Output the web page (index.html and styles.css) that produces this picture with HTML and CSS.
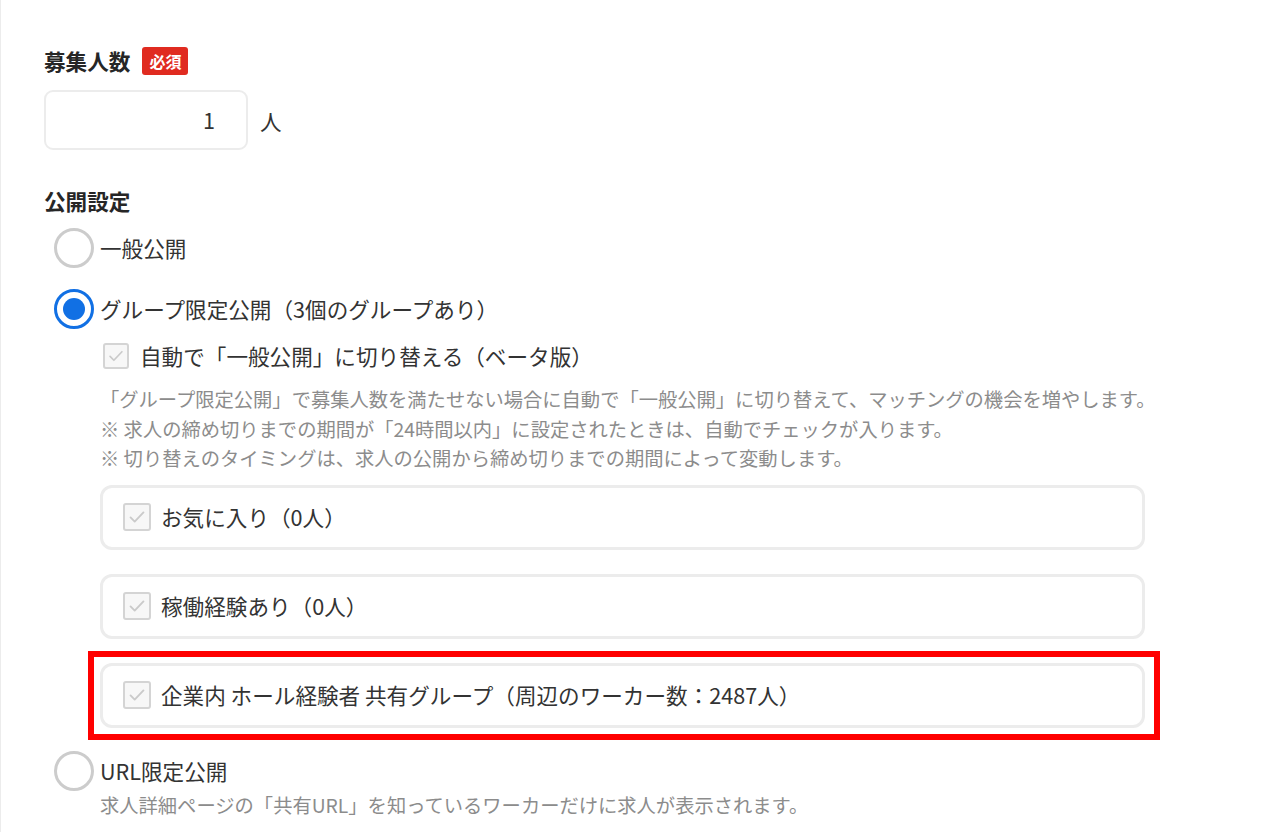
FILE: index.html
```html
<!DOCTYPE html>
<html lang="ja">
<head>
<meta charset="utf-8">
<title>募集設定</title>
<link rel="stylesheet" href="styles.css">
</head>
<body>
<div class="page">
  <section class="field">
    <div class="field-title">
      <span class="title-text">募集人数</span>
      <span class="badge">必須</span>
    </div>
    <div class="number-row">
      <div class="number-input">1</div>
      <span class="unit">人</span>
    </div>
  </section>

  <section class="field field-publish">
    <div class="field-title">
      <span class="title-text">公開設定</span>
    </div>
    <div class="radio-list">
      <div class="radio-option">
        <span class="radio"></span>
        <span class="radio-label">一般公開</span>
      </div>

      <div class="radio-option radio-option-gap">
        <span class="radio radio-on"><span class="radio-dot"></span></span>
        <span class="radio-label">グループ限定公開（3個のグループあり）</span>
      </div>
      <div class="option-body">
        <div class="check-row">
          <span class="checkbox">
            <svg viewBox="0 0 26 26" width="24" height="24"><path d="M6 13.5l4.5 4.5L20 8" fill="none" stroke="#cacaca" stroke-width="2" stroke-linecap="round" stroke-linejoin="round"/></svg>
          </span>
          <span class="check-label">自動で「一般公開」に切り替える（ベータ版）</span>
        </div>
        <div class="note">
          <p>「グループ限定公開」で募集人数を満たせない場合に自動で「一般公開」に切り替えて、マッチングの機会を増やします。</p>
          <p>※ 求人の締め切りまでの期間が「24時間以内」に設定されたときは、自動でチェックが入ります。</p>
          <p>※ 切り替えのタイミングは、求人の公開から締め切りまでの期間によって変動します。</p>
        </div>
        <div class="group-list">
          <div class="group-card">
            <span class="checkbox">
              <svg viewBox="0 0 26 26" width="24" height="24"><path d="M6 13.5l4.5 4.5L20 8" fill="none" stroke="#cacaca" stroke-width="2" stroke-linecap="round" stroke-linejoin="round"/></svg>
            </span>
            <span class="check-label">お気に入り（0人）</span>
          </div>
          <div class="group-card">
            <span class="checkbox">
              <svg viewBox="0 0 26 26" width="24" height="24"><path d="M6 13.5l4.5 4.5L20 8" fill="none" stroke="#cacaca" stroke-width="2" stroke-linecap="round" stroke-linejoin="round"/></svg>
            </span>
            <span class="check-label">稼働経験あり（0人）</span>
          </div>
          <div class="group-card group-card-highlight">
            <span class="checkbox">
              <svg viewBox="0 0 26 26" width="24" height="24"><path d="M6 13.5l4.5 4.5L20 8" fill="none" stroke="#cacaca" stroke-width="2" stroke-linecap="round" stroke-linejoin="round"/></svg>
            </span>
            <span class="check-label">企業内 ホール経験者 共有グループ（周辺のワーカー数：2487人）</span>
          </div>
        </div>
      </div>

      <div class="radio-option radio-option-last">
        <span class="radio"></span>
        <span class="radio-label">URL限定公開</span>
      </div>
      <div class="option-body">
        <p class="note note-single">求人詳細ページの「共有URL」を知っているワーカーだけに求人が表示されます。</p>
      </div>
    </div>
  </section>
</div>
</body>
</html>
```
FILE: styles.css
```css
* {
  box-sizing: border-box;
}

html, body {
  margin: 0;
  padding: 0;
  background: #ffffff;
}

body {
  font-family: "Noto Sans CJK JP", "Noto Sans", sans-serif;
  color: #333333;
}

p {
  margin: 0;
}

.page {
  min-height: 832px;
  border-left: 1px solid #ececec;
  padding: 47px 0 0 43px;
}

.field-title {
  display: flex;
  align-items: center;
  height: 28px;
}

.title-text {
  font-size: 21.6px;
  line-height: 28px;
  font-weight: 700;
  color: #262626;
}

.badge {
  margin-left: 12px;
  height: 28px;
  padding: 0 7px;
  border-radius: 3px;
  background: #e02b20;
  color: #ffffff;
  font-size: 16px;
  font-weight: 700;
  line-height: 28px;
}

.number-row {
  margin-top: 15px;
  display: flex;
  align-items: center;
}

.number-input {
  width: 204px;
  height: 60px;
  border: 2px solid #ececec;
  border-radius: 9px;
  padding-right: 31px;
  text-align: right;
  font-size: 21.6px;
  line-height: 56px;
  color: #333333;
}

.unit {
  margin-left: 12px;
  font-size: 21.6px;
  color: #333333;
}

.field-publish {
  margin-top: 37px;
}

.radio-list {
  margin-top: 13px;
}

.radio-option {
  display: flex;
  align-items: center;
  gap: 6px;
  height: 40px;
}

.radio-option-gap {
  margin-top: 21px;
}

.radio-option-last {
  margin-top: 23px;
}

.radio {
  width: 40px;
  height: 40px;
  margin-left: 10px;
  border: 3px solid #cccccc;
  border-radius: 50%;
  display: flex;
  align-items: center;
  justify-content: center;
  background: #ffffff;
}

.radio-on {
  border-color: #1170e4;
}

.radio-dot {
  width: 22px;
  height: 22px;
  border-radius: 50%;
  background: #1170e4;
}

.radio-label {
  font-size: 21.6px;
  line-height: 30px;
  color: #333333;
}

.option-body {
  padding-left: 56px;
}

.check-row {
  margin-top: 12px;
  display: flex;
  align-items: center;
  height: 30px;
}

.check-row .checkbox {
  margin-left: 3px;
}

.checkbox {
  width: 26px;
  height: 26px;
  flex: none;
  border: 2px solid #d4d4d4;
  border-radius: 3px;
  background: #f7f7f7;
  display: flex;
  align-items: center;
  justify-content: center;
}

.check-label {
  margin-left: 11px;
  font-size: 21.6px;
  line-height: 30px;
  color: #333333;
}

.note {
  margin-top: 14px;
  font-size: 19.3px;
  line-height: 29.5px;
  color: #8c8c8c;
}

.note-single {
  margin-top: 0;
}

.group-list {
  margin-top: 11px;
  display: flex;
  flex-direction: column;
  gap: 24px;
  width: 1045px;
}

.group-card {
  position: relative;
  height: 65px;
  border: 3px solid #ececec;
  border-radius: 12px;
  padding-left: 20px;
  display: flex;
  align-items: center;
}

.group-card .checkbox {
  width: 28px;
  height: 28px;
}

.group-card .check-label {
  margin-left: 10px;
}

.group-card-highlight::after {
  content: "";
  position: absolute;
  left: -15px;
  right: -18px;
  top: -15px;
  bottom: -15px;
  border: 6px solid #ff0000;
  pointer-events: none;
}
```
